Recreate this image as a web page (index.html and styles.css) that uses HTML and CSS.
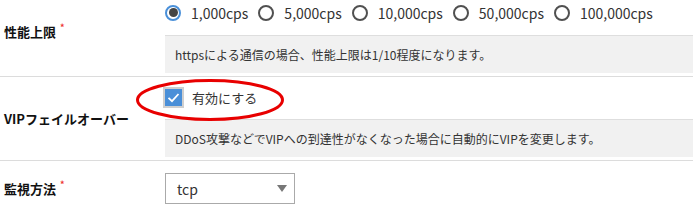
FILE: index.html
```html
<!DOCTYPE html>
<html lang="ja">
<head>
<meta charset="utf-8">
<link rel="stylesheet" href="styles.css">
</head>
<body>
<div class="form">
  <div class="row row-first">
    <div class="label">性能上限<span class="req">*</span></div>
    <div class="content">
      <div class="radios">
        <label class="radio"><span class="circle checked"></span>1,000cps</label>
        <label class="radio"><span class="circle"></span>5,000cps</label>
        <label class="radio"><span class="circle"></span>10,000cps</label>
        <label class="radio"><span class="circle"></span>50,000cps</label>
        <label class="radio"><span class="circle"></span>100,000cps</label>
      </div>
      <div class="help">httpsによる通信の場合、性能上限は1/10程度になります。</div>
    </div>
  </div>
  <div class="row row-vip">
    <div class="label">VIPフェイルオーバー</div>
    <div class="content">
      <label class="check"><span class="box"><svg width="17" height="17" viewBox="0 0 17 17"><path d="M3.5 8.8 L7 12.2 L13.5 5" fill="none" stroke="#fff" stroke-width="1.8"/></svg></span>有効にする</label>
      <div class="help">DDoS攻撃などでVIPへの到達性がなくなった場合に自動的にVIPを変更します。</div>
      <svg class="mark" width="152" height="44" viewBox="0 0 152 44"><ellipse cx="76" cy="22" rx="72.5" ry="19.5" fill="none" stroke="#e80000" stroke-width="3"/></svg>
    </div>
  </div>
  <div class="row row-last">
    <div class="label">監視方法<span class="req">*</span></div>
    <div class="content">
      <div class="select"><span>tcp</span><span class="arrow"></span></div>
    </div>
  </div>
</div>
</body>
</html>
```

FILE: styles.css
```css
html, body {
  margin: 0;
  padding: 0;
  background: #fff;
  overflow: hidden;
}
body {
  font-family: "Noto Sans CJK JP", "Noto Sans", sans-serif;
  color: #333;
}
.form {
  width: 693px;
  margin-top: -14px;
}
.row {
  display: flex;
  border-bottom: 1px solid #dcdcdc;
}
.label {
  width: 161px;
  flex: none;
  padding-left: 4px;
  display: flex;
  align-items: center;
  font-weight: bold;
  font-size: 13px;
  color: #111;
}
.req {
  color: #e33;
  font-size: 9px;
  margin-left: 4px;
  position: relative;
  top: -4px;
}
.content {
  flex: 1;
  position: relative;
}
.row-first .content {
  padding-top: 18px;
  padding-bottom: 3px;
}
.radios {
  display: flex;
  align-items: center;
  height: 17px;
  font-size: 14px;
  color: #333;
}
.radio {
  display: flex;
  align-items: center;
  margin-right: 10px;
}
.circle {
  flex: none;
  box-sizing: border-box;
  width: 16px;
  height: 16px;
  border: 2px solid #505050;
  border-radius: 50%;
  margin-right: 10px;
  position: relative;
}
.circle.checked {
  border-color: #4a90d9;
}
.circle.checked::after {
  content: "";
  position: absolute;
  left: 1.5px;
  top: 1.5px;
  width: 9px;
  height: 9px;
  border-radius: 50%;
  background: #444;
}
.help {
  margin-top: 14px;
  background: #f1f1f1;
  border-top: 1px solid #dedede;
  height: 37px;
  padding-left: 10px;
  display: flex;
  align-items: center;
  font-size: 12px;
  color: #333;
}
.row-vip .content {
  padding-top: 10px;
  padding-bottom: 3px;
}
.row-vip .help {
  margin-top: 11px;
}
.check {
  display: flex;
  align-items: center;
  height: 21px;
  font-size: 13px;
  color: #333;
}
.box {
  flex: none;
  box-sizing: border-box;
  width: 21px;
  height: 21px;
  border: 2px solid #cfcfcf;
  background: #4a8fd8;
  margin-left: -2px;
  margin-right: 8px;
  display: flex;
  align-items: center;
  justify-content: center;
}
.box svg {
  width: 17px;
  height: 17px;
}
.mark {
  position: absolute;
  left: -31px;
  top: 1px;
}
.row-last {
  border-bottom: none;
}
.row-last .content {
  padding-top: 12px;
  padding-bottom: 12px;
}
.select {
  width: 117px;
  height: 29px;
  border: 1px solid #aaa;
  padding-left: 11px;
  display: flex;
  align-items: center;
  justify-content: space-between;
  font-size: 14px;
  color: #333;
}
.arrow {
  width: 0;
  height: 0;
  border-left: 5px solid transparent;
  border-right: 5px solid transparent;
  border-top: 7px solid #777;
  margin-right: 7px;
}
```
